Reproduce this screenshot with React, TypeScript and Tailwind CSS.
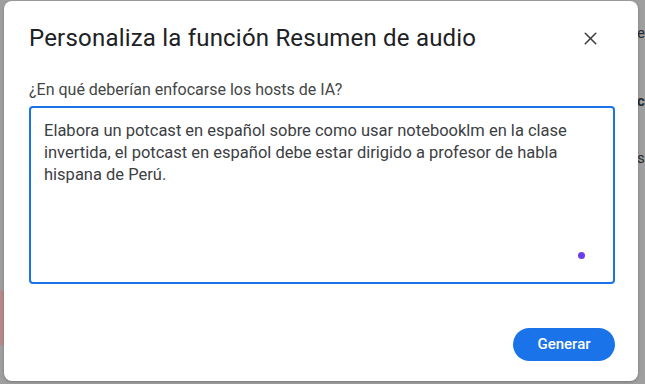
import { X } from 'lucide-react'

export default function App() {
  return (
    <div
      className="relative h-[384px] w-[645px] overflow-hidden bg-[#9f9f9f]"
      style={{ fontFamily: 'Roboto, "Noto Sans", sans-serif' }}
    >
      {/* faint page behind the overlay */}
      <div className="absolute right-0 top-0 flex h-full w-[8px] flex-col text-[15px] text-[#2a2a2a]">
        <span className="mt-[22px]">e</span>
        <span className="mt-[45px] font-bold">c</span>
        <span className="mt-[35px]">s</span>
      </div>
      <div className="absolute left-0 top-[290px] h-[56px] w-[4px] rounded-r bg-[#b58a8a]" />

      <div className="absolute left-[4px] top-[1px] flex h-[380px] w-[634px] flex-col rounded-[8px] bg-white pl-[25px] pr-[24px] shadow-[0_1px_3px_rgba(0,0,0,0.25)]">
        <div className="flex items-center justify-between pt-[23px]">
          <h2 className="text-[24px] leading-[28px] tracking-[0.2px] text-[#202124]">Personaliza la función Resumen de audio</h2>
          <button className="mr-[13px] text-[#3c4043]">
            <X className="h-[21px] w-[21px]" strokeWidth={1.8} />
          </button>
        </div>

        <p className="mt-[28px] text-[16px] leading-[20px] text-[#444746]">¿En qué deberían enfocarse los hosts de IA?</p>

        <div className="relative mt-[6px] h-[178px] w-[586px] rounded-[4px] border-2 border-[#1a73e8] pl-[13px] pr-[30px] pt-[12px]">
          <p className="text-[16.5px] leading-[22px] text-[#3c4043]">
            Elabora un potcast en español sobre como usar notebooklm en la clase invertida, el potcast en español debe estar dirigido a profesor de habla hispana de Perú.
          </p>
          <span className="absolute left-[547px] top-[144px] h-[7px] w-[7px] rounded-full bg-[#6a3ef0]" />
        </div>

        <div className="mt-auto flex justify-end pb-[20px]">
          <button className="mr-[-1px] h-[33px] w-[102px] rounded-full bg-[#1a73e8] text-[15px] font-medium text-white">
            Generar
          </button>
        </div>
      </div>
    </div>
  )
}
